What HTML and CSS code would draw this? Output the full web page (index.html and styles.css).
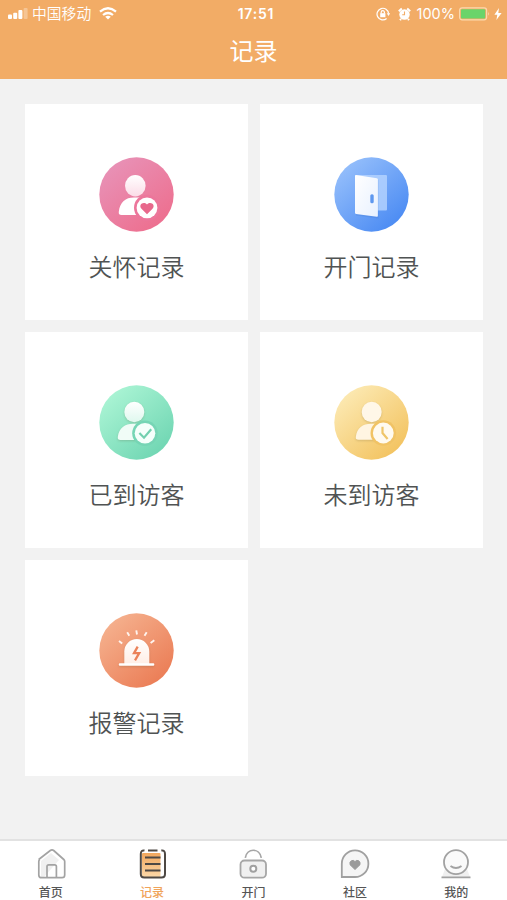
FILE: index.html
```html
<!DOCTYPE html>
<html lang="zh-CN">
<head>
<meta charset="utf-8">
<title>记录</title>
<link rel="stylesheet" href="styles.css">
</head>
<body>
<header class="header">
  <div class="status">
    <div class="status-left">
      <svg width="20" height="12" viewBox="0 0 20 12" fill="#fff"><rect x="0" y="6.5" width="4" height="4.5" rx="1"/><rect x="5.2" y="4.8" width="4" height="6.2" rx="1"/><rect x="10.4" y="2" width="4" height="9" rx="1"/><rect x="15.6" y="0" width="4" height="11" rx="1" opacity=".3"/></svg>
      <span class="carrier">中国移动</span>
      <svg class="wifi" width="18" height="13" viewBox="0 0 18 13" fill="none" stroke="#fff" stroke-width="2.2"><path d="M1 4.6Q9-2.1 17 4.6M4 8Q9 4 14 8"/><path d="M6.2 9.7Q9 7.6 11.8 9.7L9 12.6z" fill="#fff" stroke="none"/></svg>
    </div>
    <span class="time">17:51</span>
    <div class="status-right">
      <svg width="14" height="14" viewBox="0 0 14 14" fill="none" stroke="#fff" stroke-width="1.2"><path d="M10.6 11.5A5.8 5.8 0 1 1 12.6 6.5"/><path d="M10.8 6.3h3.4L12.5 9z" fill="#fff" stroke="none"/><rect x="4.2" y="6.2" width="5.2" height="4" fill="#fff" stroke="none"/><path d="M5.2 6.5V5.2a1.6 1.6 0 0 1 3.2 0v1.3"/></svg>
      <svg class="alarm" width="13" height="14" viewBox="0 0 13 14"><circle cx="6.5" cy="7.5" r="5.2" fill="#fff"/><path d="M.8 4.2L3.8 1.5M9.2 1.5l3 2.7M3 12l-1 1.2M10 12l1 1.2" stroke="#fff" stroke-width="2"/><path d="M6.5 4.4v3.4H4.2" fill="none" stroke="#f2ac66" stroke-width="1.1"/></svg>
      <span class="percent">100%</span>
      <svg class="battery" width="32" height="14" viewBox="0 0 32 14"><rect x=".6" y=".8" width="27" height="12" rx="2.5" fill="none" stroke="#fbd9ae" stroke-width="1.2"/><rect x="2" y="2.2" width="24.2" height="9.2" rx="1" fill="#6bd46a"/><path d="M29.2 4.8q1.8 2 0 4z" fill="#fbd9ae"/></svg>
      <svg class="bolt" width="8" height="12" viewBox="0 0 8 12"><path d="M5 0L.4 6.7h2.9L2.4 12l5.2-7H4.3z" fill="#fff"/></svg>
    </div>
  </div>
  <h1 class="title">记录</h1>
</header>
<main class="grid">
  <a class="card">
    <svg class="icon" viewBox="0 0 75 75">
      <defs><linearGradient id="pink" x1=".15" y1=".1" x2=".8" y2=".9"><stop stop-color="#e891b6"/><stop offset="1" stop-color="#ed7090"/></linearGradient>
      <linearGradient id="pinkHead" x2="0" y2="1"><stop stop-color="#fff"/><stop offset="1" stop-color="#fbdce7"/></linearGradient></defs>
      <circle cx="37.5" cy="37.5" r="37.2" fill="url(#pink)"/>
      <ellipse cx="36.3" cy="28.700" rx="10.300" ry="10.700" fill="url(#pinkHead)"/>
      <path d="M22.500 58Q19.300 58 19.800 54.800C21 45 26.500 40.500 35 40.500H43V58z" fill="#fff"/>
      <circle cx="48" cy="50.800" r="13" fill="#ec769b"/><circle cx="48" cy="50.800" r="10.400" fill="#fff"/>
      <path d="M48 57.200L42.500 51.800C39 47.800 44.500 43.700 48 47.600C51.500 43.700 57 47.800 53.500 51.800z" fill="#e8688c"/>
    </svg>
    <span class="label">关怀记录</span>
  </a>
  <a class="card">
    <svg class="icon" viewBox="0 0 75 75">
      <defs><linearGradient id="blue" x1=".15" y1=".1" x2=".85" y2=".9"><stop stop-color="#94befb"/><stop offset="1" stop-color="#4b8bf3"/></linearGradient>
      <linearGradient id="door" x2="1" y2="1"><stop stop-color="#fff"/><stop offset="1" stop-color="#e8f1ff"/></linearGradient></defs>
      <circle cx="37.500" cy="37.500" r="37.200" fill="url(#blue)"/>
      <rect x="22" y="18" width="31" height="35.500" rx="1" fill="#b7d4ff" opacity=".8"/>
      <path d="M22 19.500L44.500 22.800V61.500L22 58.500z" fill="#386fc9" opacity=".2"/>
      <path d="M21 19Q21 18 22 18.100L42.900 21.200Q43.900 21.400 43.900 22.400V58.700Q43.900 59.800 42.900 59.700L22 56.900Q21 56.700 21 55.700z" fill="url(#door)"/>
      <rect x="36.300" y="37.300" width="3.400" height="9" rx="1.500" fill="#5e98ef"/>
    </svg>
    <span class="label">开门记录</span>
  </a>
  <a class="card">
    <svg class="icon" viewBox="0 0 75 75">
      <defs><linearGradient id="green" x1=".15" y1=".1" x2=".85" y2=".9"><stop stop-color="#aaf4d4"/><stop offset="1" stop-color="#70d6b3"/></linearGradient>
      <linearGradient id="greenHead" x2="0" y2="1"><stop stop-color="#fff"/><stop offset="1" stop-color="#dff8ee"/></linearGradient></defs>
      <circle cx="37.500" cy="37.500" r="37.200" fill="url(#green)"/>
      <g class="shade"><ellipse cx="35.300" cy="27" rx="10" ry="10.200" fill="url(#greenHead)"/>
      <path d="M21.500 55Q18.300 55 18.800 52C20 43 26 38.800 34 38.800H42V55z" fill="#f0fcf7"/></g>
      <circle cx="46" cy="48.300" r="12.800" fill="#76d5b5"/><circle cx="46" cy="48.300" r="10.300" fill="#f5fffb"/>
      <path d="M40.400 48L45 52.700L52.200 44.300" fill="none" stroke="#72d0af" stroke-width="2.200"/>
    </svg>
    <span class="label">已到访客</span>
  </a>
  <a class="card">
    <svg class="icon" viewBox="0 0 75 75">
      <defs><linearGradient id="yellow" x1=".15" y1=".1" x2=".85" y2=".9"><stop stop-color="#fce9b2"/><stop offset="1" stop-color="#f3c360"/></linearGradient></defs>
      <circle cx="37.500" cy="37.500" r="37.200" fill="url(#yellow)"/>
      <g class="shade"><ellipse cx="37.700" cy="27" rx="10" ry="10.200" fill="#fff7e8"/>
      <path d="M24.500 54.800Q21.300 54.800 21.800 52C23 43 28.500 38.800 37 38.800H44V54.800z" fill="#fff5e2"/></g>
      <circle cx="49.300" cy="48" r="12.800" fill="#f1c365"/><circle cx="49.300" cy="48" r="10.400" fill="#fffaf0"/>
      <path d="M48.500 41.800V48L53.600 54" fill="none" stroke="#efc569" stroke-width="2.200"/>
    </svg>
    <span class="label">未到访客</span>
  </a>
  <a class="card">
    <svg class="icon" viewBox="0 0 75 75">
      <defs><linearGradient id="orange" x1=".15" y1=".1" x2=".85" y2=".9"><stop stop-color="#f5b08d"/><stop offset="1" stop-color="#eb7d56"/></linearGradient>
      <linearGradient id="dome" x2="0" y2="1"><stop stop-color="#fff"/><stop offset="1" stop-color="#ffeee6"/></linearGradient></defs>
      <circle cx="37.500" cy="37.500" r="37.200" fill="url(#orange)"/>
      <path d="M20 28L23.200 30.600M28.200 19.300L30.300 22.800M37.300 17.300L38 21.500M47.700 19.300L45.500 22.800M55.300 27.200L51.600 30" stroke="#fff4ee" stroke-width="1.900"/>
      <g class="shade"><path d="M25.300 51V38.500a12.500 12.500 0 0 1 25 0V51z" fill="url(#dome)"/>
      <rect x="19.800" y="50.200" width="35.500" height="2.500" rx="1" fill="#fff"/></g>
      <path d="M38.700 33.600L35 40.200H40.200L36 47.300" fill="none" stroke="#eb8259" stroke-width="2.300"/>
    </svg>
    <span class="label">报警记录</span>
  </a>
</main>
<nav class="tabs">
  <a class="tab">
    <svg class="tab-icon" viewBox="0 0 30 30"><path d="M5 12l10-8 8 7L8 28H5z" fill="#f0f0f0"/><path d="M2.700 10.500L14.300 1.500Q16 .3 17.700 1.500L27.800 10.500Q28.700 11.300 28.700 12.500V26Q28.700 28.700 26 28.700H5.500Q2.800 28.700 2.800 26V12.500Q2.800 11.300 3.700 10.500M11 28V17.500Q11 15.800 12.700 15.800H18.700Q20.400 15.800 20.400 17.500V28" fill="none" stroke="#a3a3a3" stroke-width="1.700"/></svg>
    <span>首页</span>
  </a>
  <a class="tab active">
    <svg class="tab-icon" viewBox="0 0 30 30"><defs><linearGradient id="note" x2="0" y2="1"><stop stop-color="#f2a75d"/><stop offset="1" stop-color="#fbd8a8"/></linearGradient></defs><rect x="5" y="4" width="18.500" height="24" rx="1" fill="url(#note)"/><path d="M7.500 1.500C5 1 3.800 2.500 3.800 5V25Q3.800 28.500 7.300 28.500H24.500Q28 28.500 28 25V5C28 2.500 26.800 1 24.300 1.500M11 1.500H20.500M8 8.500H23.500M8 15H23.500M8 21.500H23.500" fill="none" stroke="#4e4944" stroke-width="2"/></svg>
    <span>记录</span>
  </a>
  <a class="tab">
    <svg class="tab-icon" viewBox="0 0 30 30"><rect x="2.500" y="11.500" width="25.500" height="17.200" rx="4" fill="#f0f0f0" stroke="#a6a6a6" stroke-width="1.800"/><path d="M7.300 8.800C9-1.300 21.500-1.300 23.300 8.800" fill="none" stroke="#a6a6a6" stroke-width="1.700"/><circle cx="15.300" cy="19.800" r="3" fill="#fff" stroke="#a0a0a0" stroke-width="2"/></svg>
    <span>开门</span>
  </a>
  <a class="tab">
    <svg class="tab-icon" viewBox="0 0 30 30"><path d="M1.800 28V15A13.300 13.300 0 1 1 15 28z" fill="#f5f5f5" stroke="#a0a0a0" stroke-width="1.800"/><path d="M15 20.500L10 15.700V13.200L11.700 11.500H13.700L15 12.700L16.300 11.500H18.300L20 13.200V15.700z" fill="#9b9b9b" stroke="#9b9b9b" stroke-linejoin="round"/></svg>
    <span>社区</span>
  </a>
  <a class="tab">
    <svg class="tab-icon" viewBox="0 0 30 30"><path d="M4 20H26L29 28H1z" fill="#f0f0f0"/><circle cx="15" cy="13.200" r="12" fill="#fafafa" stroke="#a2a2a2" stroke-width="1.800"/><path d="M9.500 17Q15 21 20.500 17M.5 28.300H29.500" fill="none" stroke="#a2a2a2" stroke-width="1.800"/></svg>
    <span>我的</span>
  </a>
</nav>
</body>
</html>
```
FILE: styles.css
```css
* { box-sizing: border-box; }
body {
  margin: 0;
  height: 900px;
  display: flex;
  flex-direction: column;
  overflow: hidden;
  background: #f2f2f2;
  font-family: "Liberation Sans", "Noto Sans CJK SC", sans-serif;
  color: #505353;
}
svg { display: block; flex: none; }
.header { height: 79px; background: #f2ac66; color: #fff; }
.status {
  height: 27px;
  padding: 0 5px 0 8px;
  display: grid;
  grid-template-columns: 1fr auto 1fr;
  align-items: center;
  font-size: 15px;
  line-height: 20px;
}
.status-left, .status-right { display: flex; align-items: center; }
.status-right { justify-content: flex-end; }
.carrier { margin-left: 4px; padding-top: 1px; font-size: 14.8px; font-weight: 350; }
.wifi { margin-left: 8px; }
.time { padding-left: 2px; font-family: Inter, sans-serif; font-size: 14px; font-weight: 600; letter-spacing: .8px; }
.alarm { margin-left: 8px; }
.percent { margin-left: 6px; font-family: Inter, sans-serif; font-size: 14.5px; }
.battery { margin-left: 4px; }
.bolt { margin-left: 3px; }
.title { margin: 0; padding-top: 1px; font-size: 24px; font-weight: 400; line-height: 48px; text-align: center; }
.grid {
  flex: 1;
  padding: 25px 24px 0 25px;
  display: grid;
  grid-template-columns: 223px 223px;
  grid-auto-rows: 216px;
  gap: 12px;
}
.card {
  padding-top: 52.5px;
  background: #fff;
  display: flex;
  flex-direction: column;
  align-items: center;
}
.icon { width: 75px; height: 75px; }
.shade { filter: drop-shadow(0 1px 1px rgba(80, 70, 30, .2)); }
.label { margin-top: 18px; font-size: 24px; line-height: 36px; font-weight: 350; }
.tabs {
  height: 61px;
  padding-top: 8px;
  border-top: 2px solid #e2e2e2;
  background: #fff;
  display: grid;
  grid-template-columns: repeat(5, 1fr);
}
.tab {
  display: flex;
  flex-direction: column;
  align-items: center;
  font-size: 12px;
  line-height: 18px;
  font-weight: 500;
  color: #555;
}
.tab span { margin-top: 5px; }
.tab-icon { width: 30px; height: 30px; }
.active { color: #f0a45a; }
```
